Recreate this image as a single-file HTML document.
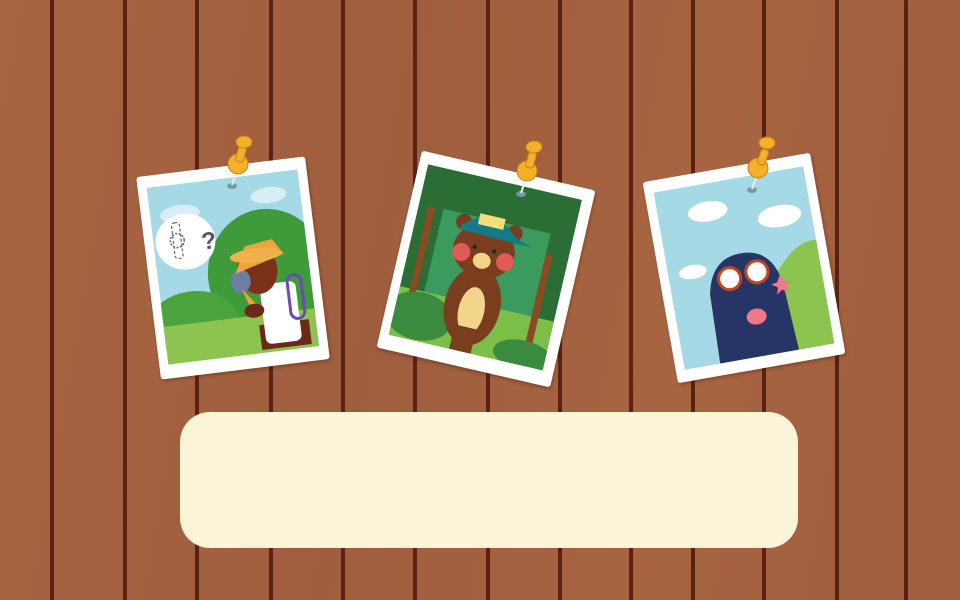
<!DOCTYPE html>
<html><head><meta charset="utf-8"><style>
html,body{margin:0;padding:0}
body{width:960px;height:600px;overflow:hidden;background:#a3613f;position:relative}
.ln{position:absolute;top:0;width:4px;height:600px;background:#5a2214}
.ph{position:absolute;background:#fff;border-radius:3px;box-shadow:1px 2px 3px rgba(60,20,10,.35)}
.ph svg{position:absolute;left:9px;top:12px}
.box{position:absolute;left:180px;top:412px;width:618px;height:136px;background:#fcf4d6;border-radius:30px}
</style></head><body>
<div style="position:absolute;inset:0;background:linear-gradient(100deg,rgba(175,105,68,.5),rgba(140,80,55,.2) 40%,rgba(175,105,68,.4) 70%,rgba(150,85,58,.3))"></div>
<div class="ln" style="left:50px"></div><div class="ln" style="left:123px"></div><div class="ln" style="left:195px"></div><div class="ln" style="left:269px"></div><div class="ln" style="left:341px"></div><div class="ln" style="left:413px"></div><div class="ln" style="left:486px"></div><div class="ln" style="left:558px"></div><div class="ln" style="left:629px"></div><div class="ln" style="left:691px"></div><div class="ln" style="left:762px"></div><div class="ln" style="left:835px"></div><div class="ln" style="left:904px"></div>

<!-- photo 1 -->
<div class="ph" style="left:148px;top:166px;width:170px;height:204px;transform:rotate(-7deg)">
<svg width="152" height="178" viewBox="0 0 152 178">
<rect width="152" height="178" fill="#a6d9e6"/>
<ellipse cx="30" cy="30" rx="20" ry="9" fill="#d8eef4"/>
<ellipse cx="120" cy="22" rx="18" ry="8" fill="#d8eef4"/>
<ellipse cx="110" cy="100" rx="60" ry="65" fill="#3f9a3a"/>
<ellipse cx="30" cy="140" rx="45" ry="32" fill="#4aa33c"/>
<rect x="0" y="140" width="152" height="38" fill="#8cc44f"/>
<ellipse cx="32" cy="58" rx="30" ry="28" fill="#fff"/>
<text x="48" y="68" font-family="Liberation Sans,sans-serif" font-size="24" font-weight="bold" fill="#555">?</text>
<circle cx="24" cy="56" r="7" fill="none" stroke="#666" stroke-width="1.5" stroke-dasharray="2 1.5"/>
<rect x="20" y="38" width="8" height="36" rx="3" fill="none" stroke="#666" stroke-width="1.2" stroke-dasharray="3 2"/>
<rect x="95" y="150" width="50" height="25" fill="#6c2a16"/>
<rect x="100" y="110" width="36" height="60" rx="6" fill="#fff"/>
<rect x="128" y="104" width="14" height="44" rx="7" fill="none" stroke="#6a4ab8" stroke-width="3"/>
<ellipse cx="100" cy="95" rx="20" ry="24" fill="#7a3019"/>
<ellipse cx="82" cy="104" rx="10" ry="12" fill="#6c7fa2"/>
<path d="M78 96 L90 70 L118 66 L128 82 Z" fill="#f0a33a"/>
<ellipse cx="100" cy="80" rx="26" ry="7" fill="#f0b04a"/>
<path d="M82 112 L90 135 L96 130 Z" fill="#f0a33a"/>
<ellipse cx="92" cy="135" rx="10" ry="7" fill="#6c2a16"/>
</svg></div>

<!-- photo 2 -->
<div class="ph" style="left:397px;top:168px;width:178px;height:202px;transform:rotate(13deg)">
<svg width="158" height="175" viewBox="0 0 158 175">
<rect width="158" height="175" fill="#2a6e36"/>
<rect x="25" y="40" width="110" height="100" fill="#3b9a5e"/>
<rect x="0" y="125" width="158" height="50" fill="#7cbf48"/>
<rect x="10" y="40" width="7" height="100" fill="#8a4a22"/>
<rect x="135" y="60" width="7" height="100" fill="#8a4a22"/>
<ellipse cx="25" cy="150" rx="34" ry="24" fill="#3a8a40"/>
<ellipse cx="135" cy="165" rx="30" ry="15" fill="#3a8a40"/>
<ellipse cx="75" cy="128" rx="28" ry="40" fill="#7a3e1e"/>
<ellipse cx="75" cy="133" rx="13" ry="24" fill="#f2d48a"/>
<rect x="62" y="150" width="22" height="25" fill="#7a3e1e"/>
<circle cx="48" cy="48" r="8" fill="#7a3e1e"/>
<circle cx="100" cy="48" r="8" fill="#7a3e1e"/>
<ellipse cx="74" cy="72" rx="31" ry="27" fill="#7a3e1e"/>
<circle cx="52" cy="78" r="9" fill="#e05a56"/>
<circle cx="97" cy="78" r="9" fill="#e05a56"/>
<ellipse cx="74" cy="82" rx="9" ry="8" fill="#f2d48a"/>
<circle cx="64" cy="70" r="2" fill="#222"/><circle cx="84" cy="70" r="2" fill="#222"/>
<path d="M46 52 Q74 24 102 52 L120 58 L46 56 Z" fill="#147a86"/>
<rect x="62" y="36" width="26" height="11" fill="#f2e07a"/>
</svg></div>

<!-- photo 3 -->
<div class="ph" style="left:659px;top:166px;width:170px;height:204px;transform:rotate(-10deg)">
<svg width="152" height="180" viewBox="0 0 152 180">
<rect width="152" height="180" fill="#a6d9e6"/>
<ellipse cx="50" cy="28" rx="20" ry="10" fill="#fff"/>
<ellipse cx="120" cy="45" rx="22" ry="11" fill="#fff"/>
<ellipse cx="25" cy="85" rx="14" ry="7" fill="#fff"/>
<path d="M100 180 L100 110 Q130 70 152 75 L152 180 Z" fill="#8cc44f"/>
<path d="M36 180 L38 110 Q45 75 75 75 Q108 75 112 115 L116 180 Z" fill="#263565"/>
<circle cx="60" cy="98" r="11" fill="#fff" stroke="#c5461e" stroke-width="3"/>
<circle cx="88" cy="96" r="11" fill="#fff" stroke="#c5461e" stroke-width="3"/>
<path d="M106 110 l4 -7 l3 7 l7 1 l-6 4 l2 7 l-6 -4 l-6 4 l2 -7 l-6 -4 z" fill="#f07888"/>
<ellipse cx="80" cy="140" rx="10" ry="8" fill="#f07888"/>
</svg></div>

<!-- pins -->
<svg style="position:absolute;left:0;top:0" width="960" height="600">
<g fill="#f4b027" stroke="#c88018" stroke-width="1">
<ellipse cx="232" cy="186" rx="5" ry="3" fill="#6f9aa8" stroke="none"/><path d="M232 185 L237 170" stroke="#eee" stroke-width="2"/><ellipse cx="238" cy="164" rx="10" ry="10"/><rect x="237" y="146" width="8" height="16" rx="3" transform="rotate(15 241 154)"/><ellipse cx="244" cy="142" rx="8" ry="6"/>
<ellipse cx="521" cy="194" rx="5" ry="3" fill="#6f9aa8" stroke="none"/><path d="M521 193 L526 178" stroke="#eee" stroke-width="2"/><ellipse cx="527" cy="171" rx="10" ry="10"/><rect x="527" y="152" width="8" height="16" rx="3" transform="rotate(15 531 160)"/><ellipse cx="534" cy="147" rx="8" ry="6"/>
<ellipse cx="752" cy="190" rx="5" ry="3" fill="#6f9aa8" stroke="none"/><path d="M752 189 L757 176" stroke="#eee" stroke-width="2"/><ellipse cx="758" cy="168" rx="10" ry="10"/><rect x="759" y="149" width="8" height="16" rx="3" transform="rotate(20 763 157)"/><ellipse cx="767" cy="143" rx="8" ry="6"/>
</g></svg>

<div class="box"></div>
</body></html>
